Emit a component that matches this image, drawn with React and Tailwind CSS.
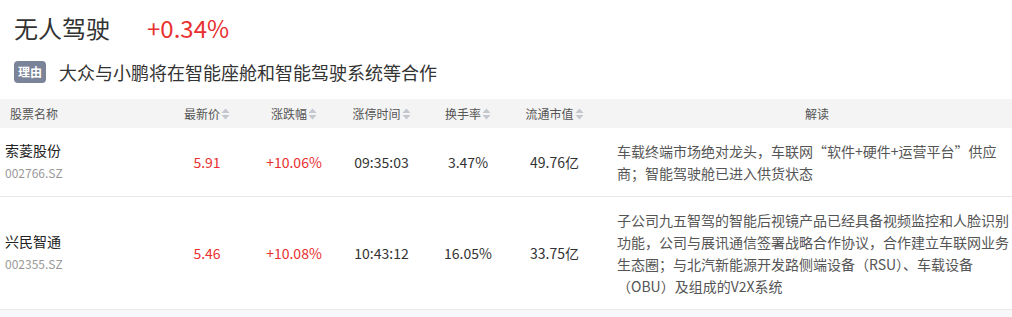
const rows = [
  {
    name: "索菱股份",
    code: "002766.SZ",
    price: "5.91",
    change: "+10.06%",
    time: "09:35:03",
    turnover: "3.47%",
    cap: "49.76亿",
    note: "车载终端市场绝对龙头，车联网“软件+硬件+运营平台”供应商；智能驾驶舱已进入供货状态",
  },
  {
    name: "兴民智通",
    code: "002355.SZ",
    price: "5.46",
    change: "+10.08%",
    time: "10:43:12",
    turnover: "16.05%",
    cap: "33.75亿",
    note: "子公司九五智驾的智能后视镜产品已经具备视频监控和人脸识别功能，公司与展讯通信签署战略合作协议，合作建立车联网业务生态圈；与北汽新能源开发路侧端设备（RSU）、车载设备（OBU）及组成的V2X系统",
  },
];

function SortIcon() {
  return (
    <svg width="9" height="12" viewBox="0 0 9 12" className="ml-[1px]">
      <path d="M4.5 0.5 L8.5 5 H0.5 Z" fill="#c4c7cf" />
      <path d="M4.5 11.5 L8.5 7 H0.5 Z" fill="#c4c7cf" />
    </svg>
  );
}

function HeadCell({ label }) {
  return (
    <div className="flex items-center justify-center">
      <span>{label}</span>
      <SortIcon />
    </div>
  );
}

export default function App() {
  return (
    <div
      className="w-[1012px] h-[317px] bg-white text-[#333] overflow-hidden"
      style={{ fontFamily: '"Noto Sans CJK SC", "Noto Sans", sans-serif' }}
    >
      <div className="flex items-center h-[54px] pl-[14px] pt-[2px]">
        <span className="text-[24px] text-[#333]">无人驾驶</span>
        <span className="text-[24px] text-[#e93030] ml-[37px]">+0.34%</span>
      </div>

      <div className="flex items-center h-[36px] pl-[14px]">
        <span className="rounded-[4px] bg-[#7b8399] text-white text-[12px] leading-[22px] px-[4px] font-bold">
          理由
        </span>
        <span className="ml-[13px] text-[18px] text-[#333]">大众与小鹏将在智能座舱和智能驾驶系统等合作</span>
      </div>

      <div className="mt-[9px] grid grid-cols-[164px_86px_88px_87px_86px_87px_1fr] h-[29px] items-center bg-[#f4f4f4] text-[12px] text-[#555]">
        <div className="pl-[10px]">股票名称</div>
        <HeadCell label="最新价" />
        <HeadCell label="涨跌幅" />
        <HeadCell label="涨停时间" />
        <HeadCell label="换手率" />
        <HeadCell label="流通市值" />
        <div className="text-center pl-[24px]">解读</div>
      </div>

      {rows.map((r) => (
        <div
          key={r.code}
          className="grid grid-cols-[164px_86px_88px_87px_86px_87px_1fr] items-center border-b border-[#e8e8e8] text-[14px]"
        >
          <div className="pl-[5px]">
            <div className="leading-[22px] text-[#222]">{r.name}</div>
            <div className="text-[12px] leading-[24px] text-[#999]">{r.code}</div>
          </div>
          <div className="text-center text-[#e93030]">{r.price}</div>
          <div className="text-center text-[#e93030]">{r.change}</div>
          <div className="text-center text-[#333]">{r.time}</div>
          <div className="text-center text-[#333]">{r.turnover}</div>
          <div className="text-center text-[#333]">{r.cap}</div>
          <div className="pl-[19px] py-[12px] leading-[22px] text-[#555]">{r.note}</div>
        </div>
      ))}

      <div className="h-[10px] bg-[#f8f8fa]" />
    </div>
  );
}
